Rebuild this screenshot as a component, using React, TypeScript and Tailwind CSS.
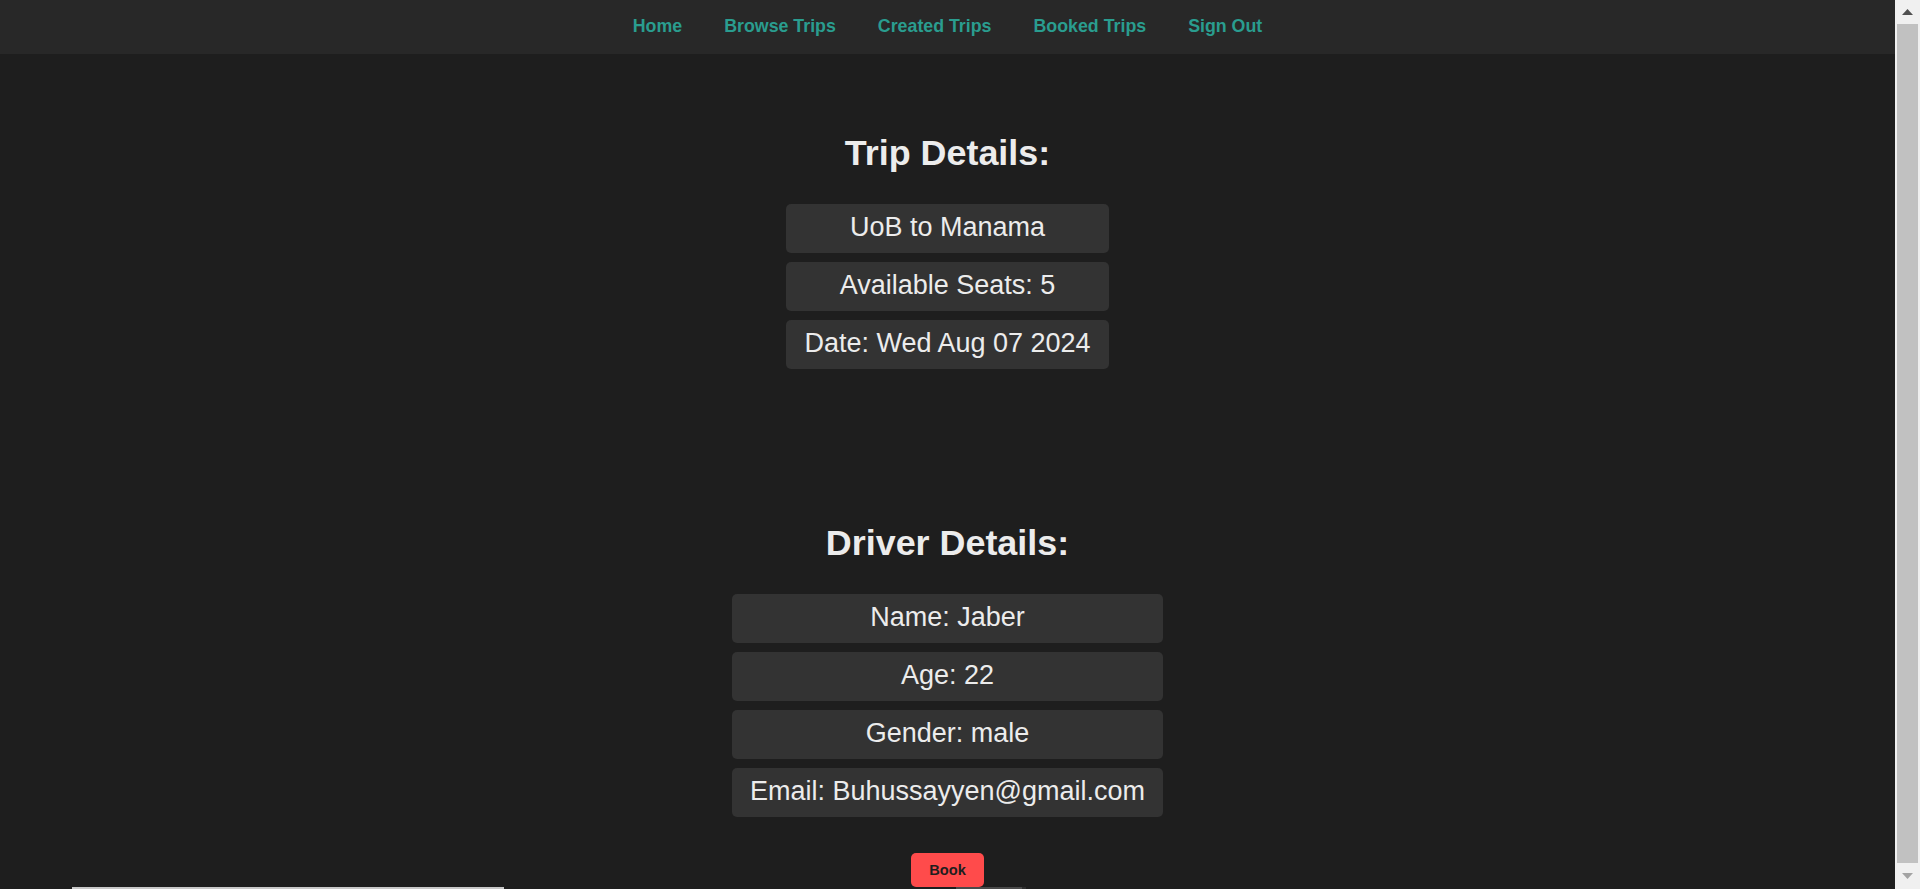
import React from 'react';

const navLinks = ['Home', 'Browse Trips', 'Created Trips', 'Booked Trips', 'Sign Out'];

const tripInfo = ['UoB to Manama', 'Available Seats: 5', 'Date: Wed Aug 07 2024'];

const driverInfo = ['Name: Jaber', 'Age: 22', 'Gender: male', 'Email: Buhussayyen@gmail.com'];

function InfoList({ items }: { items: string[] }) {
  return (
    <div className="flex flex-col gap-[9px] w-fit">
      {items.map((item) => (
        <div
          key={item}
          className="bg-[#333333] rounded-[5px] px-[18px] pt-[8px] pb-[10px] text-center text-[27px] leading-[31px] text-[#ececec] whitespace-nowrap"
        >
          {item}
        </div>
      ))}
    </div>
  );
}

function Scrollbar() {
  return (
    <div className="w-[25px] h-full bg-[#f0f0f0] flex flex-col shrink-0">
      <div className="h-[24px] flex items-center justify-center">
        <svg width="11" height="6" viewBox="0 0 11 6">
          <path d="M5.5 0 L11 6 L0 6 Z" fill="#505050" />
        </svg>
      </div>
      <div className="mx-[2px] h-[839px] bg-[#c1c1c1]" />
      <div className="flex-1 flex items-center justify-center">
        <svg width="11" height="6" viewBox="0 0 11 6">
          <path d="M0 0 L11 0 L5.5 6 Z" fill="#a3a3a3" />
        </svg>
      </div>
    </div>
  );
}

export default function App() {
  return (
    <div className="flex h-[889px] w-full overflow-hidden bg-[#1e1e1e] font-['Liberation_Sans',Arial,sans-serif]">
      <div className="flex-1 flex flex-col min-w-0">
        {/* Navbar */}
        <nav className="h-[54px] bg-[#282828] flex items-center justify-center gap-[42px] pb-[2px] shrink-0">
          {navLinks.map((link) => (
            <a
              key={link}
              href="#"
              className="text-[17.8px] font-bold text-[#2a9d8f] no-underline"
            >
              {link}
            </a>
          ))}
        </nav>

        {/* Trip details */}
        <section className="flex flex-col items-center mt-[79px]">
          <h1 className="text-[35.9px] leading-[40px] font-bold text-[#ececec]">Trip Details:</h1>
          <div className="mt-[31px]">
            <InfoList items={tripInfo} />
          </div>
        </section>

        {/* Driver details */}
        <section className="flex flex-col items-center mt-[154px]">
          <h1 className="text-[35.9px] leading-[40px] font-bold text-[#ececec]">Driver Details:</h1>
          <div className="mt-[31px]">
            <InfoList items={driverInfo} />
          </div>
          <button className="mt-[36px] h-[34px] px-[18px] rounded-[5px] bg-[#ff4b4b] text-[14.67px] font-bold text-[#1e1e1e]">
            Book
          </button>
        </section>

        {/* top edge of content below the fold */}
        <div className="flex h-[2px] shrink-0">
          <div className="ml-[72px] w-[432px] bg-[#c8c8c8]" />
          <div className="ml-[452px] w-[66px] bg-[#4a4a4a]" />
          <div className="w-[4px] bg-[#2e2e2e]" />
        </div>
      </div>
      <Scrollbar />
    </div>
  );
}
